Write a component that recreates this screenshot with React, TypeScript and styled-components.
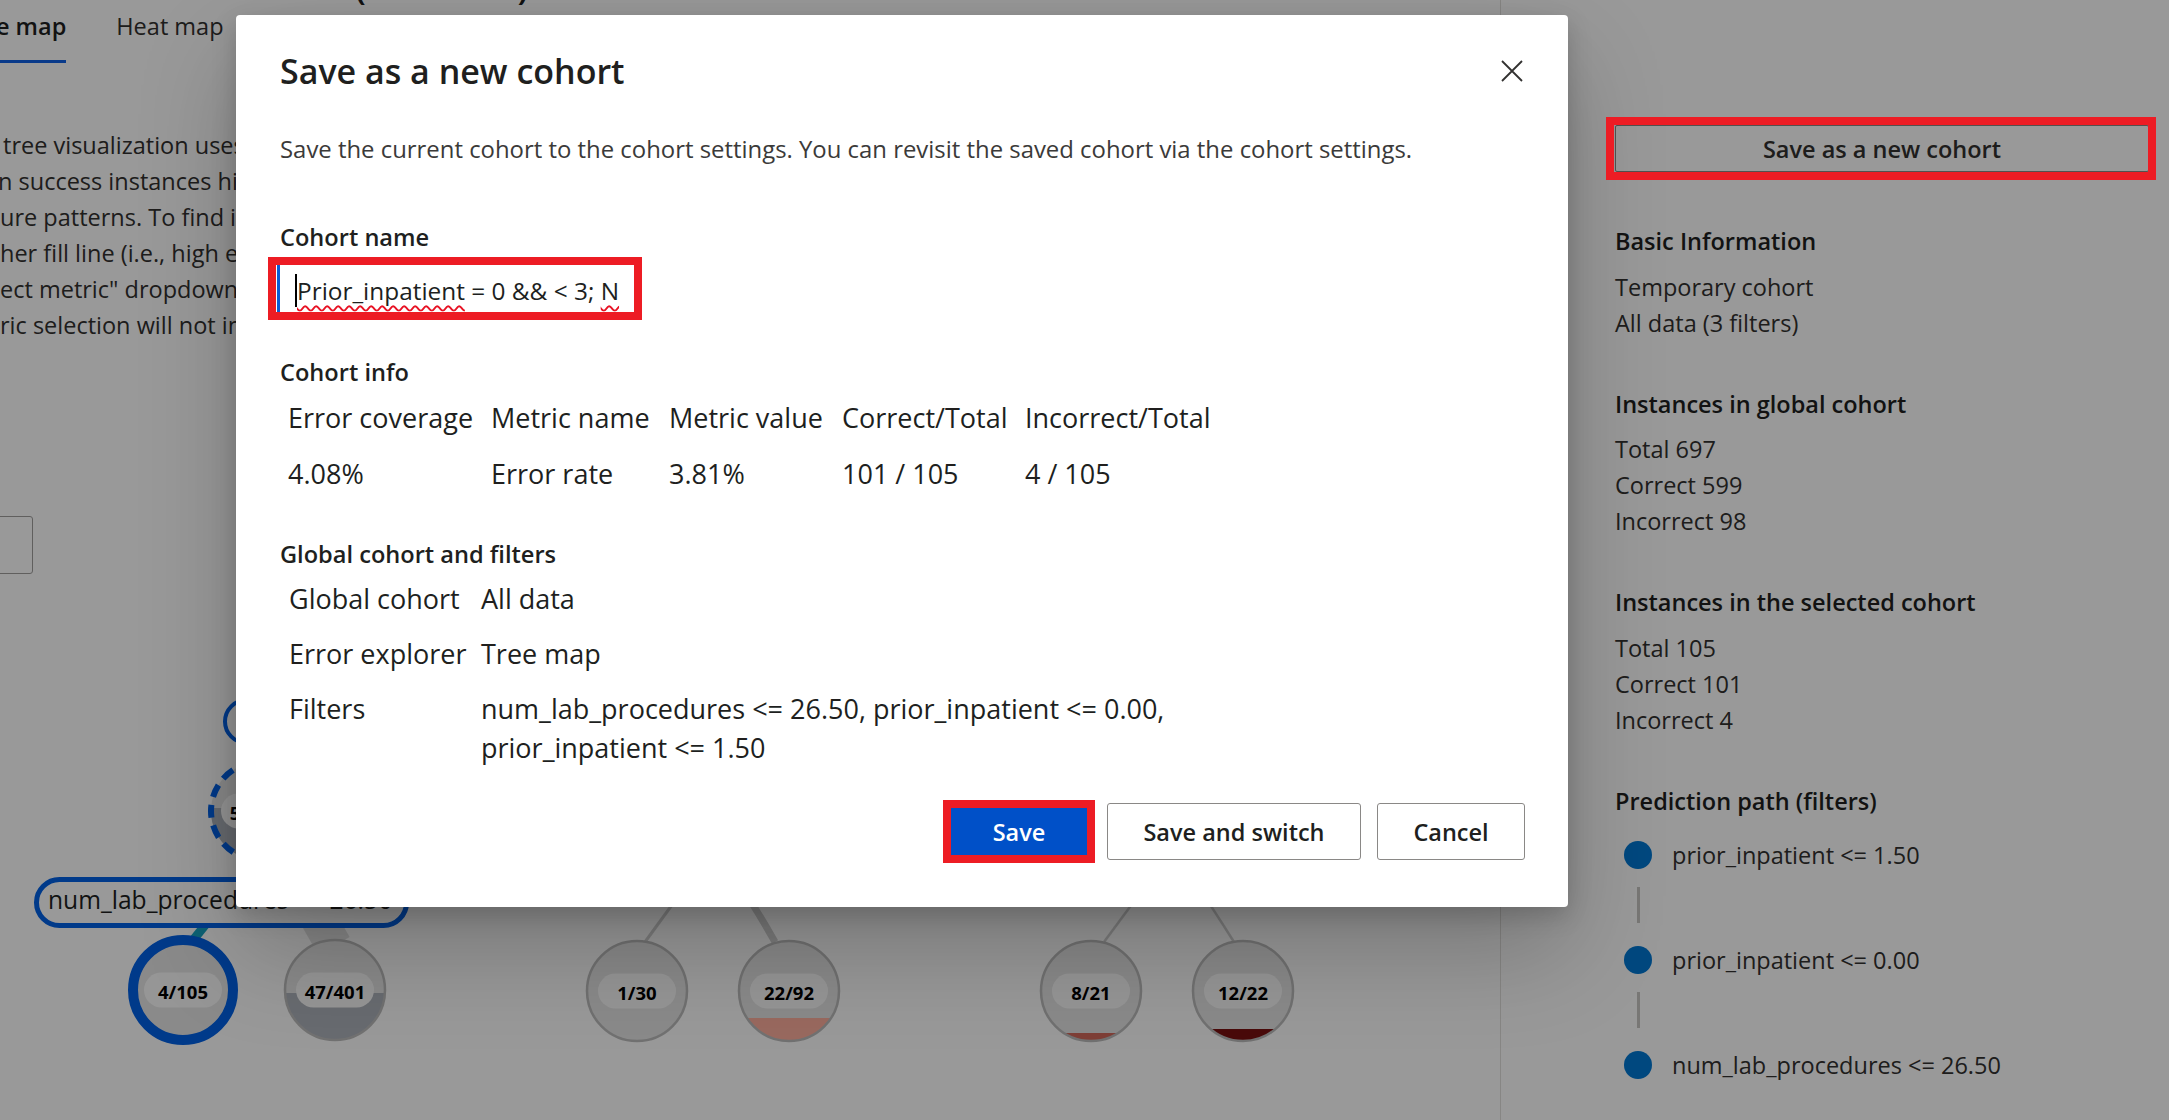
import React from "react";
import styled, { createGlobalStyle } from "styled-components";

const FONT = `"Open Sans", "Noto Sans", "Liberation Sans", Arial, sans-serif`;

const GlobalStyle = createGlobalStyle`
  *, *::before, *::after { box-sizing: border-box; }
  html, body { margin: 0; padding: 0; background: #ffffff; }
  body { font-family: ${FONT}; color: #323130; overflow: hidden; }
  button { font-family: ${FONT}; }
`;

const Page = styled.div`
  position: relative;
  width: 2169px;
  height: 1120px;
  overflow: hidden;
  display: flex;
  background: #ffffff;
`;

/* ---------- main (dimmed) area ---------- */
const Main = styled.main`
  flex: 0 0 1500px;
  display: flex;
  flex-direction: column;
  overflow: hidden;
`;

const PageTitle = styled.h1`
  margin: -33px 0 0;
  padding-left: 355px;
  height: 40px;
  font-size: 34px;
  font-weight: 600;
  line-height: 40px;
  white-space: nowrap;
  color: #201f1e;
  flex: none;
`;

const TabRow = styled.nav`
  display: flex;
  gap: 50px;
  height: 52px;
  margin-top: 4px;
  flex: none;
`;

const Tab = styled.div<{ $selected?: boolean; $offset?: number }>`
  margin-left: ${(p) => p.$offset ?? 0}px;
  height: 52px;
  padding-bottom: 19px;
  font-size: 23.5px;
  line-height: 30px;
  font-weight: ${(p) => (p.$selected ? 600 : 400)};
  color: ${(p) => (p.$selected ? "#201f1e" : "#323130")};
  border-bottom: 3px solid ${(p) => (p.$selected ? "#1062e6" : "transparent")};
  white-space: nowrap;
`;

const Intro = styled.div`
  margin-top: 64px;
  font-size: 23.5px;
  line-height: 36px;
  white-space: nowrap;
  color: #323130;
  flex: none;
`;

const IntroLine = styled.div<{ $shift: number }>`
  margin-left: ${(p) => p.$shift}px;
`;

const MetricSelect = styled.div`
  flex: none;
  margin: 173px 0 0 -201px;
  width: 234px;
  height: 58px;
  border: 1px solid #a19f9d;
  border-radius: 3px;
  background: #ffffff;
`;

const TreeSvg = styled.svg`
  display: block;
  flex: none;
  margin-top: 26px;
  font-family: ${FONT};
`;

/* ---------- right side panel ---------- */
const SidePanel = styled.aside`
  flex: 1 1 auto;
  border-left: 1px solid #e1dfdd;
  padding: 125px 18px 0 114px;
  font-size: 23.5px;
  line-height: 36px;
  color: #323130;
`;

const PanelButton = styled.button`
  display: block;
  width: 534px;
  height: 47px;
  margin-bottom: 51px;
  border: 1px solid #8a8886;
  border-radius: 2px;
  background: #ffffff;
  color: #323130;
  font-size: 23.5px;
  font-weight: 600;
`;

const PanelSection = styled.section`
  margin-top: 45px;
`;

const PanelHeading = styled.h3`
  margin: 0 0 9.5px;
  font-size: 23.5px;
  line-height: 36px;
  font-weight: 600;
  color: #201f1e;
`;

const PanelItem = styled.div`
  white-space: nowrap;
`;

const PathList = styled.div`
  padding-top: 8.5px;
  display: flex;
  flex-direction: column;
`;

const PathItem = styled.div`
  display: flex;
  align-items: center;
  height: 36px;
  white-space: nowrap;
`;

const PathDot = styled.span`
  width: 28px;
  height: 28px;
  border-radius: 50%;
  background: #0078d4;
  margin: 0 20px 0 9px;
  flex: none;
`;

const PathConnector = styled.span`
  width: 3px;
  height: 36px;
  margin: 14.5px 0 18.5px 21.5px;
  background: #c8c6c4;
`;

/* ---------- overlay + dialog ---------- */
const Overlay = styled.div`
  position: absolute;
  inset: 0;
  background: rgba(0, 0, 0, 0.4);
  z-index: 1;
`;

const Dialog = styled.section`
  position: absolute;
  left: 236px;
  top: 15px;
  width: 1332px;
  height: 892px;
  z-index: 2;
  display: flex;
  flex-direction: column;
  padding: 32px 43px 0 44px;
  background: #ffffff;
  border-radius: 4px;
  box-shadow: 0 44px 98px rgba(0, 0, 0, 0.22), 0 8px 24px rgba(0, 0, 0, 0.18);
  color: #323130;
`;

const DialogHeader = styled.header`
  display: flex;
  align-items: center;
  justify-content: space-between;
  height: 48px;
  flex: none;
`;

const DialogTitle = styled.h2`
  margin: 0;
  font-size: 34px;
  line-height: 48px;
  font-weight: 600;
  color: #201f1e;
`;

const CloseButton = styled.button`
  width: 48px;
  height: 48px;
  margin-right: -11px;
  padding: 0;
  border: 0;
  background: transparent;
  display: flex;
  align-items: center;
  justify-content: center;
  color: #323130;
`;

const Description = styled.p`
  margin: 36px 0 0;
  font-size: 23.9px;
  line-height: 36px;
  color: #3b3a39;
  white-space: nowrap;
`;

const FieldLabel = styled.div<{ $top: number }>`
  margin-top: ${(p) => p.$top}px;
  font-size: 23.6px;
  line-height: 36px;
  font-weight: 600;
  color: #201f1e;
  white-space: nowrap;
`;

const RedBox = styled.div<{ $w: number; $h: number }>`
  display: flex;
  flex: none;
  width: ${(p) => p.$w}px;
  height: ${(p) => p.$h}px;
  border: 8px solid #ed1c24;
  background: #ffffff;
`;

const NameBox = styled(RedBox)`
  margin: 2px 0 0 -12px;
`;

const FakeInput = styled.div`
  flex: 1;
  display: flex;
  align-items: center;
  margin-left: 1px;
  padding: 3px 0 0 15px;
  border-left: 3px solid #0a5cd6;
  font-size: 24.4px;
  color: #201f1e;
  overflow: hidden;
  white-space: pre;
`;

const Caret = styled.span`
  display: block;
  width: 2px;
  height: 33px;
  background: #000000;
  flex: none;
`;

const InputText = styled.span`
  white-space: pre;
`;

const Misspelled = styled.span`
  text-decoration: underline wavy #e81123;
  text-decoration-thickness: 1.5px;
  text-underline-offset: 5px;
  text-decoration-skip-ink: none;
`;

const InfoGrid = styled.div`
  display: grid;
  grid-template-columns: 203px 178px 173px 183px auto;
  margin-left: 8px;
  font-size: 27px;
  line-height: 56px;
  color: #201f1e;
  white-space: nowrap;
`;

const DetailGrid = styled.div`
  display: grid;
  grid-template-columns: 192px 720px;
  margin: -1px 0 0 9px;
  font-size: 27px;
  line-height: 39px;
  color: #201f1e;
`;

const DetailCell = styled.div`
  padding: 8px 0;
`;

const Footer = styled.footer`
  margin-top: 25.5px;
  display: flex;
  justify-content: flex-end;
  align-items: center;
  gap: 16px;
`;

const SaveBox = styled(RedBox)`
  margin-right: -4px;
`;

const PrimaryButton = styled.button`
  flex: 1;
  border: 0;
  padding: 0;
  background: #0050c8;
  color: #ffffff;
  font-size: 23.5px;
  font-weight: 600;
`;

const DefaultButton = styled.button<{ $w: number }>`
  width: ${(p) => p.$w}px;
  height: 57px;
  padding: 0;
  border: 1px solid #8a8886;
  border-radius: 3px;
  background: #ffffff;
  color: #201f1e;
  font-size: 23.5px;
  font-weight: 600;
`;

const Annotation = styled.div`
  position: absolute;
  left: 1606px;
  top: 117px;
  width: 550px;
  height: 63px;
  border: 8px solid #ed1c24;
  z-index: 3;
  pointer-events: none;
`;

/* ---------- tree drawing ---------- */
type NodeProps = {
  id: string;
  cx: number;
  cy: number;
  label: string;
  fillFrom?: number;
  fillColor?: string;
  selected?: boolean;
  dashed?: boolean;
};

const BLUE = "#0061e6";

function TreeNode({ id, cx, cy, label, fillFrom, fillColor, selected, dashed }: NodeProps) {
  const strokeWidth = selected ? 10 : dashed ? 6 : 2.5;
  const r = dashed ? 49 : 50;
  return (
    <g>
      <clipPath id={id}>
        <circle cx={cx} cy={cy} r={r} />
      </clipPath>
      <circle cx={cx} cy={cy} r={r} fill="#e6e6e6" />
      {fillFrom !== undefined && (
        <rect
          x={cx - r}
          y={fillFrom}
          width={r * 2}
          height={cy + r - fillFrom}
          fill={fillColor}
          clipPath={`url(#${id})`}
        />
      )}
      <circle
        cx={cx}
        cy={cy}
        r={r}
        fill="none"
        stroke={selected || dashed ? BLUE : "#bdbdbd"}
        strokeWidth={strokeWidth}
        strokeDasharray={dashed ? "13 8" : undefined}
      />
      <rect x={cx - 39} y={cy - 17.5} width={78} height={35} rx={17.5} fill="#fbfbfb" />
      <text
        x={cx}
        y={cy + 1}
        textAnchor="middle"
        dominantBaseline="central"
        fontSize="18.5"
        fontWeight="700"
        fill="#000000"
      >
        {label}
      </text>
    </g>
  );
}

function Tree() {
  return (
    <TreeSvg width={1500} height={520} viewBox="0 600 1500 520">
      {/* links */}
      <line x1={318} y1={918} x2={334} y2={946} stroke="#e2e2e2" strokeWidth={36} />
      <line x1={206} y1={924} x2={190} y2={944} stroke="#17a2c0" strokeWidth={9} />
      <path d="M713 850 Q 690 880 645 942" fill="none" stroke="#cfcfcf" strokeWidth={3} />
      <path d="M713 850 Q 740 880 775 942" fill="none" stroke="#cfcfcf" strokeWidth={7} />
      <path d="M1172 850 Q 1150 880 1104 942" fill="none" stroke="#cfcfcf" strokeWidth={2.5} />
      <path d="M1172 850 Q 1195 880 1234 942" fill="none" stroke="#cfcfcf" strokeWidth={2.5} />

      {/* upper split label */}
      <rect x={225} y={700} width={400} height={43} rx={21.5} fill="#ffffff" stroke={BLUE} strokeWidth={4} />
      <text x={240} y={730} fontSize="24.6" fill="#201f1e">
        prior_inpatient &lt;= 0.00
      </text>

      <TreeNode id="n51" cx={260} cy={811} label="51/506" fillFrom={808} fillColor="#adb2bb" dashed />

      {/* split label */}
      <rect x={36.5} y={879.5} width={370} height={46} rx={23} fill="#ffffff" stroke={BLUE} strokeWidth={5} />
      <text x={48} y={909} fontSize="24.6" fill="#201f1e">
        num_lab_procedures &lt;= 26.50
      </text>

      <TreeNode id="n4" cx={183} cy={990} label="4/105" selected />
      <TreeNode id="n47" cx={335} cy={990} label="47/401" fillFrom={993} fillColor="#adb2bb" />
      <TreeNode id="n1" cx={637} cy={991} label="1/30" />
      <TreeNode id="n22" cx={789} cy={991} label="22/92" fillFrom={1018} fillColor="#ffb09e" />
      <TreeNode id="n8" cx={1091} cy={991} label="8/21" fillFrom={1033} fillColor="#d26a5d" />
      <TreeNode id="n12" cx={1243} cy={991} label="12/22" fillFrom={1029} fillColor="#7b1212" />
    </TreeSvg>
  );
}

function CloseIcon() {
  return (
    <svg width="22" height="22" viewBox="0 0 22 22" aria-hidden="true">
      <path d="M1 1 L21 21 M21 1 L1 21" stroke="currentColor" strokeWidth="1.8" fill="none" />
    </svg>
  );
}

const introLines: { shift: number; text: string }[] = [
  { shift: 3, text: "tree visualization uses the mutual information between each feature and the error" },
  { shift: -2, text: "n success instances hierarchically in the data. This simplifies the process" },
  { shift: 0, text: "ure patterns. To find important failure patterns, look for nodes with a stronger" },
  { shift: 0, text: "her fill line (i.e., high error coverage). To edit the list of features" },
  { shift: 0, text: "ect metric\" dropdown allows you to change the metric used" },
  { shift: 0, text: "ric selection will not impact the tree structure" },
];

const infoHeaders = ["Error coverage", "Metric name", "Metric value", "Correct/Total", "Incorrect/Total"];
const infoValues = ["4.08%", "Error rate", "3.81%", "101 / 105", "4 / 105"];

export default function App() {
  return (
    <>
      <GlobalStyle />
      <Page>
        <Main>
          <PageTitle>(Test data)</PageTitle>
          <TabRow>
            <Tab $selected $offset={-41}>
              Tree map
            </Tab>
            <Tab>Heat map</Tab>
          </TabRow>
          <Intro>
            {introLines.map((l, i) => (
              <IntroLine key={i} $shift={l.shift}>
                {l.text}
              </IntroLine>
            ))}
          </Intro>
          <MetricSelect />
          <Tree />
        </Main>

        <SidePanel>
          <PanelButton>Save as a new cohort</PanelButton>
          <PanelSection>
            <PanelHeading>Basic Information</PanelHeading>
            <PanelItem>Temporary cohort</PanelItem>
            <PanelItem>All data (3 filters)</PanelItem>
          </PanelSection>
          <PanelSection>
            <PanelHeading>Instances in global cohort</PanelHeading>
            <PanelItem>Total 697</PanelItem>
            <PanelItem>Correct 599</PanelItem>
            <PanelItem>Incorrect 98</PanelItem>
          </PanelSection>
          <PanelSection>
            <PanelHeading>Instances in the selected cohort</PanelHeading>
            <PanelItem>Total 105</PanelItem>
            <PanelItem>Correct 101</PanelItem>
            <PanelItem>Incorrect 4</PanelItem>
          </PanelSection>
          <PanelSection>
            <PanelHeading>Prediction path (filters)</PanelHeading>
            <PathList>
              <PathItem>
                <PathDot />
                prior_inpatient &lt;= 1.50
              </PathItem>
              <PathConnector />
              <PathItem>
                <PathDot />
                prior_inpatient &lt;= 0.00
              </PathItem>
              <PathConnector />
              <PathItem>
                <PathDot />
                num_lab_procedures &lt;= 26.50
              </PathItem>
            </PathList>
          </PanelSection>
        </SidePanel>

        <Overlay />

        <Dialog role="dialog" aria-label="Save as a new cohort">
          <DialogHeader>
            <DialogTitle>Save as a new cohort</DialogTitle>
            <CloseButton aria-label="Close">
              <CloseIcon />
            </CloseButton>
          </DialogHeader>
          <Description>
            Save the current cohort to the cohort settings. You can revisit the saved cohort via the cohort settings.
          </Description>

          <FieldLabel $top={52}>Cohort name</FieldLabel>
          <NameBox $w={374} $h={63}>
            <FakeInput>
              <Caret />
              <InputText>
                <Misspelled>Prior_inpatient</Misspelled>
                {" = 0 && < 3; "}
                <Misspelled>N</Misspelled>
              </InputText>
            </FakeInput>
          </NameBox>

          <FieldLabel $top={33.5}>Cohort info</FieldLabel>
          <InfoGrid>
            {infoHeaders.map((h) => (
              <div key={h}>{h}</div>
            ))}
            {infoValues.map((v) => (
              <div key={v}>{v}</div>
            ))}
          </InfoGrid>

          <FieldLabel $top={34}>Global cohort and filters</FieldLabel>
          <DetailGrid>
            <DetailCell>Global cohort</DetailCell>
            <DetailCell>All data</DetailCell>
            <DetailCell>Error explorer</DetailCell>
            <DetailCell>Tree map</DetailCell>
            <DetailCell>Filters</DetailCell>
            <DetailCell>
              num_lab_procedures &lt;= 26.50, prior_inpatient &lt;= 0.00, prior_inpatient &lt;= 1.50
            </DetailCell>
          </DetailGrid>

          <Footer>
            <SaveBox $w={152} $h={63}>
              <PrimaryButton>Save</PrimaryButton>
            </SaveBox>
            <DefaultButton $w={254}>Save and switch</DefaultButton>
            <DefaultButton $w={148}>Cancel</DefaultButton>
          </Footer>
        </Dialog>

        <Annotation />
      </Page>
    </>
  );
}
